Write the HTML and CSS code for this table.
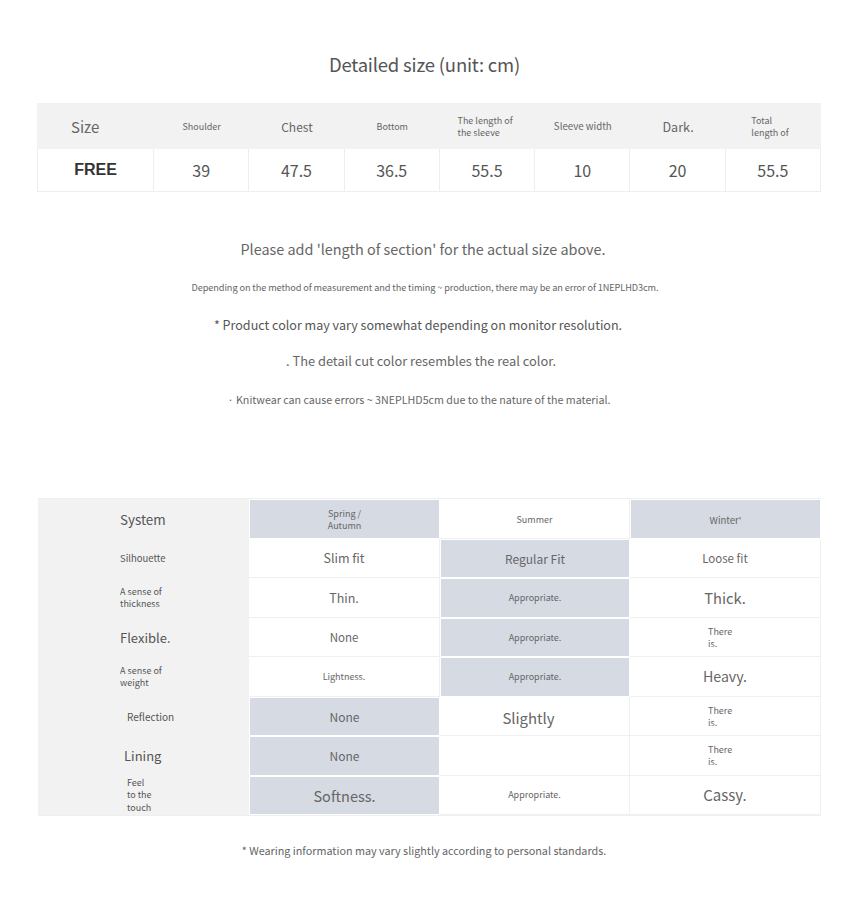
FILE: index.html
```html
<!DOCTYPE html>
<html>
<head>
<meta charset="utf-8">
<link rel="stylesheet" href="styles.css">
</head>
<body>
<div class="page">
  <h1 class="title">Detailed size (unit: cm)</h1>

  <div class="size-table">
    <div class="sh sh-first"><span class="f15">Size</span></div>
    <div class="sh"><span class="f9">Shoulder</span></div>
    <div class="sh"><span class="f12">Chest</span></div>
    <div class="sh"><span class="f9">Bottom</span></div>
    <div class="sh"><span class="two w60">The length of<br>the sleeve</span></div>
    <div class="sh"><span class="f97">Sleeve width</span></div>
    <div class="sh"><span class="f126">Dark.</span></div>
    <div class="sh"><span class="two w46">Total<br>length of</span></div>

    <div class="sd sd-first">FREE</div>
    <div class="sd">39</div>
    <div class="sd">47.5</div>
    <div class="sd">36.5</div>
    <div class="sd">55.5</div>
    <div class="sd">10</div>
    <div class="sd">20</div>
    <div class="sd">55.5</div>
  </div>

  <div class="notes">
    <p class="n1">Please add 'length of section' for the actual size above.</p>
    <p class="n2">Depending on the method of measurement and the timing ~ production, there may be an error of 1NEPLHD3cm.</p>
    <p class="n3">* Product color may vary somewhat depending on monitor resolution.</p>
    <p class="n4">. The detail cut color resembles the real color.</p>
    <p class="n5">· Knitwear can cause errors ~ 3NEPLHD5cm due to the nature of the material.</p>
  </div>

  <div class="fit-table">
    <div class="lb"><span class="f134">System</span></div>
    <div class="c hl head"><span class="two tc">Spring /<br>Autumn</span></div>
    <div class="c head"><span class="f9">Summer</span></div>
    <div class="c hl head"><span class="f95">Winter'</span></div>

    <div class="lb"><span class="f95">Silhouette</span></div>
    <div class="c"><span class="f125">Slim fit</span></div>
    <div class="c hl"><span class="f12">Regular Fit</span></div>
    <div class="c"><span class="f115">Loose fit</span></div>

    <div class="lb"><span class="two">A sense of<br>thickness</span></div>
    <div class="c"><span class="f125">Thin.</span></div>
    <div class="c hl"><span class="f9">Appropriate.</span></div>
    <div class="c"><span class="f147">Thick.</span></div>

    <div class="lb"><span class="f13">Flexible.</span></div>
    <div class="c"><span class="f115">None</span></div>
    <div class="c hl"><span class="f9">Appropriate.</span></div>
    <div class="c"><span class="two there">There<br>is.</span></div>

    <div class="lb"><span class="two">A sense of<br>weight</span></div>
    <div class="c"><span class="f9">Lightness.</span></div>
    <div class="c hl"><span class="f9">Appropriate.</span></div>
    <div class="c"><span class="f142">Heavy.</span></div>

    <div class="lb lb-in"><span class="f10">Reflection</span></div>
    <div class="c hl"><span class="f12">None</span></div>
    <div class="c"><span class="f149 slightly">Slightly</span></div>
    <div class="c"><span class="two there">There<br>is.</span></div>

    <div class="lb lb-in2"><span class="f13">Lining</span></div>
    <div class="c hl"><span class="f12">None</span></div>
    <div class="c"></div>
    <div class="c"><span class="two there">There<br>is.</span></div>

    <div class="lb lb-in"><span class="three">Feel<br>to the<br>touch</span></div>
    <div class="c hl"><span class="f145">Softness.</span></div>
    <div class="c"><span class="f9">Appropriate.</span></div>
    <div class="c"><span class="f15">Cassy.</span></div>
  </div>

  <p class="footer">* Wearing information may vary slightly according to personal standards.</p>
</div>
</body>
</html>
```

FILE: styles.css
```css
* { box-sizing: border-box; }
html, body { margin: 0; padding: 0; background: #fff; }
body {
  font-family: "Noto Sans CJK KR", "Noto Sans", sans-serif;
  color: #666;
}
.page { width: 860px; padding-top: 51px; }

.title {
  margin: 0;
  text-align: center;
  font-size: 18.5px;
  line-height: 26px;
  font-weight: normal;
  color: #555;
  letter-spacing: -0.2px;
  padding-right: 11px;
}

.size-table {
  margin: 26px 0 0 37px;
  width: 784px;
  display: grid;
  grid-template-columns: 117px repeat(7, 1fr);
  grid-template-rows: 46px 43px;
}
.sh {
  background: #f2f2f2;
  display: flex;
  align-items: center;
  justify-content: center;
  color: #666;
}
.sh-first { justify-content: flex-start; padding-left: 34px; }
.sd {
  display: flex;
  align-items: center;
  justify-content: center;
  border-right: 1px solid #eee;
  border-bottom: 1px solid #eee;
  font-size: 16px;
  color: #555;
}
.sd-first {
  border-left: 1px solid #eee;
  font-family: "Liberation Sans", Arial, sans-serif;
  font-weight: bold;
  font-size: 16px;
  color: #333;
}

.two, .three {
  display: inline-block;
  text-align: left;
  font-size: 9px;
  line-height: 12px;
}
.three { line-height: 12.5px; }
.tc { text-align: center; }
.w60 { width: 60px; padding-top: 2px; }
.w46 { width: 44px; padding-top: 2px; }

.f9 { font-size: 9px; }
.f95 { font-size: 9.5px; }
.f97 { font-size: 9.7px; }
.f10 { font-size: 10px; }
.f115 { font-size: 11.5px; }
.f12 { font-size: 12px; }
.f125 { font-size: 12.5px; }
.f126 { font-size: 12.6px; }
.f13 { font-size: 13px; }
.f134 { font-size: 13.4px; }
.f142 { font-size: 14.2px; }
.f145 { font-size: 14.5px; }
.f147 { font-size: 14.7px; }
.f149 { font-size: 14.9px; }
.f15 { font-size: 15px; }

.slightly { margin-right: 12px; padding-top: 3px; }

.notes { text-align: center; color: #666; padding-top: 38px; padding-right: 20px; }
.notes p { margin: 0; white-space: nowrap; }
.n1 { font-size: 14.4px; line-height: 38px; color: #666; padding-left: 6px; }
.n2 { font-size: 9.2px; line-height: 38px; color: #666; letter-spacing: -0.1px; padding-left: 10px; }
.n3 { font-size: 12.55px; line-height: 38px; color: #555; padding-right: 4px; }
.n4 { font-size: 12.85px; line-height: 34px; color: #666; padding-left: 2px; }
.n5 { font-size: 10.7px; line-height: 44px; color: #666; padding-right: 2px; }

.fit-table {
  margin: 76px 0 0 38px;
  width: 783px;
  height: 318px;
  display: grid;
  grid-template-columns: 211px 191px 190px 191px;
  grid-template-rows: repeat(8, 1fr);
  border: 1px solid #eeeff1;
  border-left: 0;
}
.lb {
  background: #f2f2f2;
  display: flex;
  align-items: center;
  padding-left: 82px;
  color: #555;
}
.lb-in { padding-left: 89px; }
.lb-in2 { padding-left: 86px; }
.c {
  display: flex;
  align-items: center;
  justify-content: center;
  border-right: 1px solid #f0f0f2;
  border-bottom: 1px solid #f0f0f2;
  color: #666;
}
.head { padding-top: 2px; }
.hl {
  background: #d5dae3;
  border: 1px solid #fff;
  border-bottom: 1px solid #fff;
}
.there { width: 33px; margin-left: -1px; padding-top: 2px; }

.footer {
  margin: 26px 0 0;
  padding-right: 12px;
  text-align: center;
  font-size: 10.8px;
  line-height: 16px;
  color: #666;
}
```
